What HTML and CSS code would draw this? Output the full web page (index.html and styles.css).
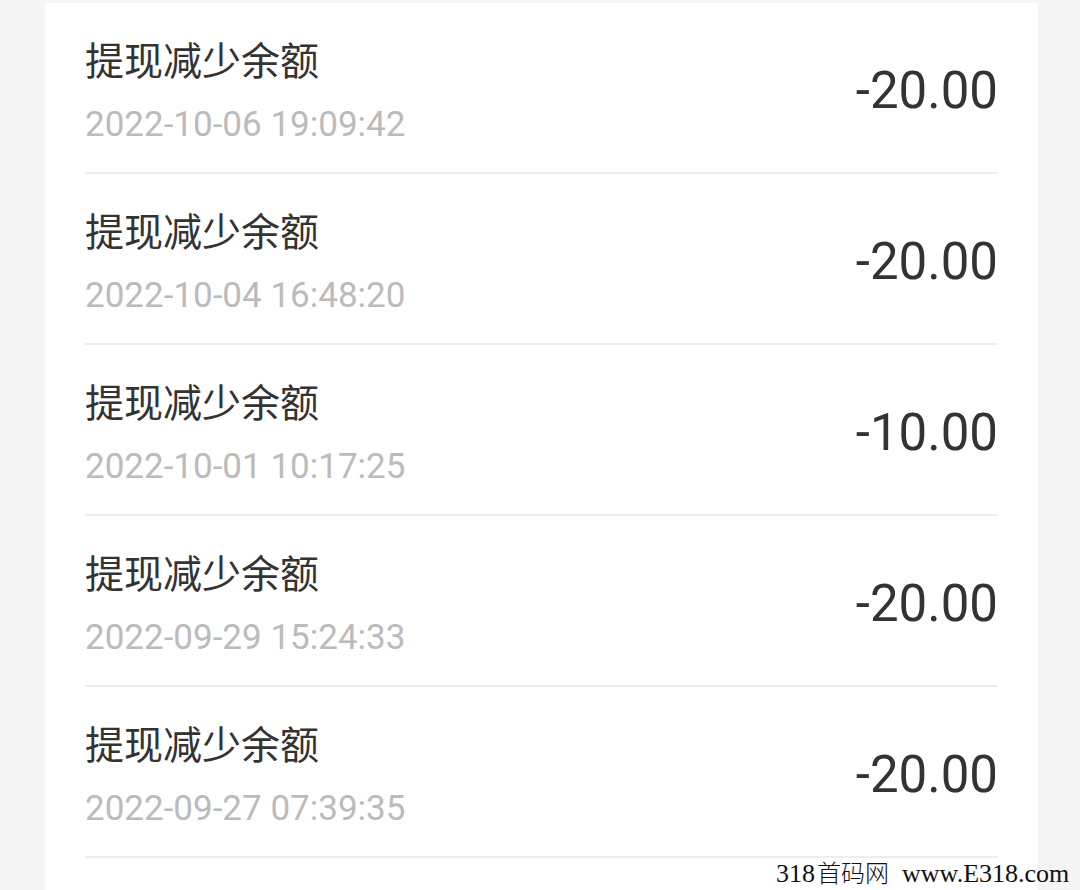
FILE: index.html
```html
<!DOCTYPE html>
<html lang="zh-CN">
<head>
    <meta charset="UTF-8">
    <link rel="stylesheet" href="styles.css">
</head>
<body>
    <div id="records">
        <div class="record">
            <div class="record-info">
                <div class="record-title">提现减少余额</div>
                <div class="record-time">2022-10-06 19:09:42</div>
            </div>
            <div class="record-amount">-20.00</div>
        </div>
        <div class="record">
            <div class="record-info">
                <div class="record-title">提现减少余额</div>
                <div class="record-time">2022-10-04 16:48:20</div>
            </div>
            <div class="record-amount">-20.00</div>
        </div>
        <div class="record">
            <div class="record-info">
                <div class="record-title">提现减少余额</div>
                <div class="record-time">2022-10-01 10:17:25</div>
            </div>
            <div class="record-amount">-10.00</div>
        </div>
        <div class="record">
            <div class="record-info">
                <div class="record-title">提现减少余额</div>
                <div class="record-time">2022-09-29 15:24:33</div>
            </div>
            <div class="record-amount">-20.00</div>
        </div>
        <div class="record">
            <div class="record-info">
                <div class="record-title">提现减少余额</div>
                <div class="record-time">2022-09-27 07:39:35</div>
            </div>
            <div class="record-amount">-20.00</div>
        </div>
    </div>

    <div class="watermark">318<span class="wm-cn">首码网</span>&nbsp; www.E318.com</div>
</body>
</html>
```

FILE: styles.css
```css
html, body {
    height: 890px;
    overflow: hidden;
}
body {
    margin: 0;
    background-color: #f5f5f5;
    font-family: Roboto, "Noto Sans CJK SC", sans-serif;
    position: relative;
}
#records {
    margin: 3px 42px 0 45px;
    padding: 0 40px 40px 40px;
    background-color: #fff;
}
.record {
    height: 169px;
    border-bottom: 2px solid #ededed;
    display: flex;
    justify-content: space-between;
    align-items: flex-start;
}
.record-info {
    padding-top: 30px;
}
.record-title {
    font-family: "Noto Sans CJK SC", sans-serif;
    font-size: 39px;
    line-height: 50px;
    color: #333;
}
.record-time {
    margin-top: 20px;
    font-size: 35px;
    line-height: 44px;
    color: #bbb;
}
.record-amount {
    padding-top: 58px;
    font-size: 51px;
    line-height: 60px;
    color: #333;
}
.watermark {
    position: absolute;
    left: 776px;
    bottom: 1px;
    font-family: "Liberation Serif", "Noto Sans CJK SC", serif;
    font-size: 26px;
    line-height: 30px;
    color: #111;
    white-space: nowrap;
}
.wm-cn {
    font-family: "Noto Sans CJK SC", sans-serif;
    font-weight: 300;
    font-size: 24px;
    margin-left: 2px;
}
```
